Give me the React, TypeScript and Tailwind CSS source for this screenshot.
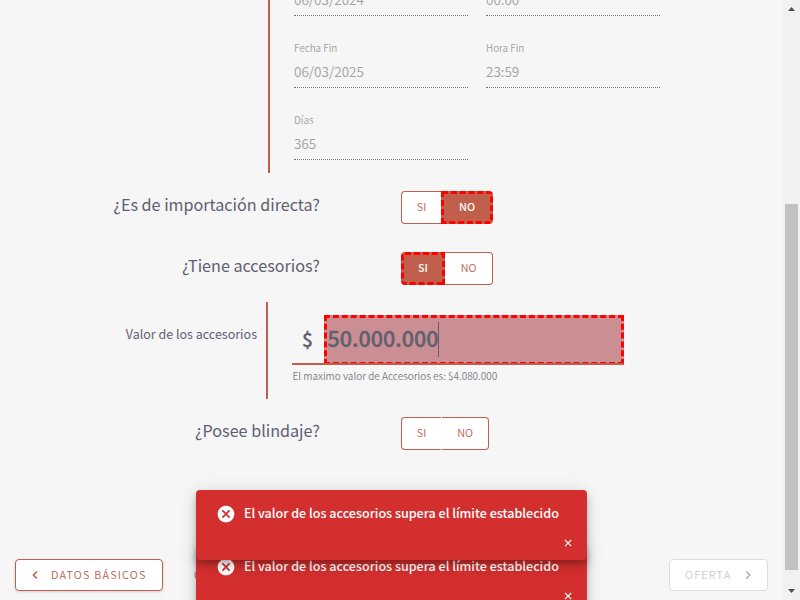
import React from "react";

function Field({ label, value }: { label?: string; value: string }) {
  return (
    <div className="flex h-[72px] w-[174px] shrink-0 flex-col border-b border-dotted border-[#777] pt-[25px] text-[#a0a0a3]">
      <div className="h-[14px] text-[9.9px] leading-[14px] font-[350]">{label}</div>
      <div className="mt-[6px] h-[20px] text-[13.5px] leading-[20px] font-[350]">{value}</div>
    </div>
  );
}

function Question({ text, children }: { text: string; children: React.ReactNode }) {
  return (
    <div className="flex h-[33px] shrink-0">
      <div className="w-[320px] text-right text-[16.15px] leading-[26px] whitespace-nowrap text-[#5f5f70]">{text}</div>
      <div className="ml-[81px] flex">{children}</div>
    </div>
  );
}

const option =
  "flex h-[33px] items-center justify-center bg-white pb-[2px] text-[10.8px] leading-none font-[350] text-[#b8604f]";
const chosen =
  "flex h-[33px] items-center justify-center border-[3px] border-dashed border-[#ff0000] bg-[#c05f4c] pb-[2px] text-[10.8px] leading-none font-medium text-white";

function Toast() {
  return (
    <div className="relative h-[70px] w-[391px] rounded-[4px] bg-[#d32f2f] text-white shadow-[0_3px_5px_-1px_rgba(0,0,0,0.2),0_6px_10px_0_rgba(0,0,0,0.14),0_1px_18px_0_rgba(0,0,0,0.12)]">
      <div className="flex items-start pt-[13px] pl-[20px]">
        <svg className="mt-[0.5px] ml-[0.4px] h-[20px] w-[20px]" viewBox="0 0 24 24" fill="#fff">
          <path d="M12 2C6.47 2 2 6.47 2 12s4.47 10 10 10 10-4.47 10-10S17.53 2 12 2zm5 13.59L15.59 17 12 13.41 8.41 17 7 15.59 10.59 12 7 8.41 8.41 7 12 10.59 15.59 7 17 8.41 13.41 12 17 15.59z" />
        </svg>
        <span className="ml-[7.5px] text-[12.56px] leading-[20px] font-medium whitespace-nowrap">
          El valor de los accesorios supera el límite establecido
        </span>
      </div>
      <svg className="absolute top-[49px] left-[368px] h-[8px] w-[8px]" viewBox="0 0 8 8" stroke="#fff" strokeWidth="1.1">
        <path d="M1 1l6.2 6.2M7.2 1L1 7.2" />
      </svg>
    </div>
  );
}

export default function App() {
  return (
    <div className="relative flex h-[600px] w-[800px] overflow-hidden bg-[#f6f6f6] font-['Noto_Sans_CJK_SC','Noto_Sans',sans-serif]">
      <main className="flex w-[783px] flex-col">
        <section className="ml-[268px] flex h-[173px] shrink-0 flex-col overflow-hidden border-l-2 border-[#c05f4c] pl-[24px]">
          <div className="flex h-[16px] shrink-0 items-end gap-[18px]">
            <Field value="06/03/2024" />
            <Field value="00:00" />
          </div>
          <div className="flex gap-[18px]">
            <Field label="Fecha Fin" value="06/03/2025" />
            <Field label="Hora Fin" value="23:59" />
          </div>
          <Field label="Días" value="365" />
        </section>

        <div className="mt-[18px] flex flex-col gap-[28px]">
          <Question text="¿Es de importación directa?">
            <div className={`${option} w-[40px] rounded-l-[4px] border border-r-0 border-[#c05f4c]`}>SI</div>
            <div className={`${chosen} w-[52px] rounded-r-[4px]`}>NO</div>
          </Question>
          <Question text="¿Tiene accesorios?">
            <div className={`${chosen} w-[44px] rounded-l-[4px]`}>SI</div>
            <div className={`${option} w-[48px] rounded-r-[4px] border border-l-0 border-[#c05f4c]`}>NO</div>
          </Question>
        </div>

        <section className="mt-[17px] flex h-[97px] shrink-0">
          <div className="w-[268px] border-r-2 border-[#c05f4c] pt-[22px] pr-[9px] text-right text-[12.5px] leading-[20px] text-[#5f5f70]">
            Valor de los accesorios
          </div>
          <div className="ml-[24px] w-[332px] pt-[13px] text-[#5f5f70]">
            <div className="flex h-[48px]">
              <div className="w-[32px] pl-[10px] text-[19px] leading-[48px] font-medium [-webkit-text-stroke:0.3px]">$</div>
              <div className="flex h-[50px] w-[300px] items-center border-[3px] border-dashed border-[#ff0000] bg-[#cb8f93] pb-[3px] text-[21.5px] leading-none font-medium [-webkit-text-stroke:0.35px]">
                <span className="mr-[-0.6px] ml-[0.6px] pb-[2px]">50.000.000</span>
                <span className="mt-[2px] h-[35px] w-px bg-[#5f5f70]" />
              </div>
            </div>
            <div className="relative h-[2px] bg-[#c05f4c]" />
            <div className="mt-[3px] pl-[0.5px] text-[9.97px] leading-[16px] font-[350] whitespace-nowrap text-[#7c7c88]">
              El maximo valor de Accesorios es: $4.080.000
            </div>
          </div>
        </section>

        <div className="mt-[18px]">
          <Question text="¿Posee blindaje?">
            <div className={`${option} w-[40px] rounded-l-[4px] border border-r-0 border-[#c05f4c]`}>SI</div>
            <div className="w-px bg-white" />
            <div className={`${option} w-[47px] rounded-r-[4px] border border-l-0 border-[#c05f4c]`}>NO</div>
          </Question>
        </div>

        <footer className="mt-[109px] flex h-[32px] shrink-0 items-center pr-[15px] pl-[15px] text-[10.8px] leading-none font-[350] tracking-[1.2px]">
          <div className="flex h-[32px] w-[148px] items-center rounded-[4px] border border-[#c05f4c] bg-white pl-[16px] text-[#b8604f] shadow-[0_1px_3px_rgba(0,0,0,0.16)]">
            <svg className="h-[8px] w-[6px]" viewBox="0 0 6 8" fill="none" stroke="#c05f4c" strokeWidth="1.5">
              <path d="M4.8.6L1.4 4l3.4 3.4" />
            </svg>
            <span className="ml-[13px] pb-[2px] whitespace-nowrap">DATOS BÁSICOS</span>
          </div>
          <span className="ml-[31px] pb-[2px] text-[#c05f4c]">COBERTURAS</span>
          <div className="ml-auto flex h-[32px] w-[99px] items-center rounded-[4px] border border-[#dcdcdc] bg-white pl-[15px] text-[#cacace]">
            <span className="pb-[2px]">OFERTA</span>
            <svg className="ml-[13.5px] h-[8px] w-[6px]" viewBox="0 0 6 8" fill="none" stroke="#b5b5b5" strokeWidth="1.6">
              <path d="M1.2.4L4.8 4 1.2 7.6" />
            </svg>
          </div>
        </footer>
      </main>

      <aside className="flex w-[17px] flex-col items-center bg-[#f1f1f1]">
        <svg className="mt-[7px] h-[4px] w-[7px]" viewBox="0 0 7 4" fill="#505050">
          <path d="M0 4h7L3.5 0z" />
        </svg>
        <div className="mt-[193px] h-[366px] w-[13px] bg-[#c1c1c1]" />
        <svg className="mt-[19px] h-[4px] w-[7px]" viewBox="0 0 7 4" fill="#505050">
          <path d="M0 0h7L3.5 4z" />
        </svg>
      </aside>

      <div className="absolute top-[543px] left-[196px]">
        <Toast />
      </div>
      <div className="absolute top-[490px] left-[196px]">
        <Toast />
      </div>
    </div>
  );
}
